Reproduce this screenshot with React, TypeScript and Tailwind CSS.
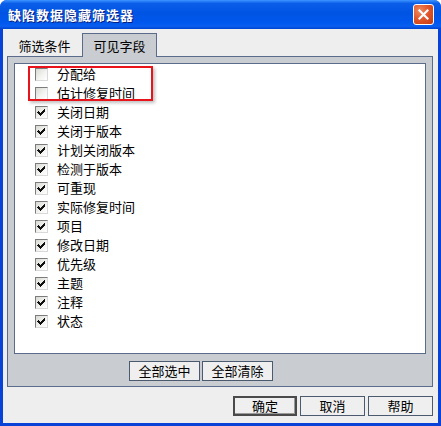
import React from 'react';

const fields = [
  { label: '分配给', checked: false },
  { label: '估计修复时间', checked: false },
  { label: '关闭日期', checked: true },
  { label: '关闭于版本', checked: true },
  { label: '计划关闭版本', checked: true },
  { label: '检测于版本', checked: true },
  { label: '可重现', checked: true },
  { label: '实际修复时间', checked: true },
  { label: '项目', checked: true },
  { label: '修改日期', checked: true },
  { label: '优先级', checked: true },
  { label: '主题', checked: true },
  { label: '注释', checked: true },
  { label: '状态', checked: true },
];

const font = "font-['SimSun','Noto_Sans_CJK_SC',sans-serif]";

const CheckBox = ({ checked }: { checked: boolean }) => (
  <div className="w-[13px] h-[13px] shrink-0 border border-t-[#7c7c7c] border-l-[#7c7c7c] border-r-[#d8d8d8] border-b-[#d8d8d8] bg-[linear-gradient(135deg,#d9d9d4_0%,#f4f4f2_60%,#ffffff_100%)]">
    {checked && (
      <svg width="11" height="11" viewBox="0 0 11 11" shapeRendering="crispEdges">
        <path d="M2 4h1v1h1v1h1v-1h1v-1h1v-1h1v-1h1v3h-1v1h-1v1h-1v1h-1v1h-1v-1h-1v-1h-1v-1h-1z" fill="#111" />
      </svg>
    )}
  </div>
);

const Btn = ({ label, width, isDefault }: { label: string; width: string; isDefault?: boolean }) => (
  <button
    className={`${width} h-[20px] flex items-center justify-center bg-[#efefef] text-[13px] text-black ${
      isDefault ? 'border-2 border-[#4a4a4a] shadow-[inset_-1px_-1px_0_#9a9a9a]' : 'border border-[#4b5a6e]'
    }`}
  >
    {label}
  </button>
);

const App: React.FC = () => {
  return (
    <div className={`w-[441px] h-[426px] flex flex-col bg-[#0842d6] rounded-t-[7px] overflow-hidden ${font}`}>
      {/* title bar */}
      <div className="h-[29px] shrink-0 flex items-center justify-between pl-[8px] pr-[7px] bg-[linear-gradient(to_bottom,#3d95ff_0%,#0a5ee8_12%,#0054e3_45%,#0058ee_80%,#0a5ff0_90%,#0044d0_100%)]">
        <span className="text-white font-bold text-[13px] tracking-[1px] [text-shadow:1px_1px_0_#0a1e7d]">缺陷数据隐藏筛选器</span>
        <div className="w-[21px] h-[21px] rounded-[3px] border border-white flex items-center justify-center bg-[radial-gradient(circle_at_30%_30%,#f08a60_0%,#e2582c_45%,#c43a10_100%)]">
          <svg width="11" height="11" viewBox="0 0 11 11">
            <path d="M1.5 1.5 L9.5 9.5 M9.5 1.5 L1.5 9.5" stroke="#fff" strokeWidth="2.2" strokeLinecap="square" />
          </svg>
        </div>
      </div>

      {/* body */}
      <div className="flex-1 mx-[3px] mb-[3px] bg-[#eeeeee] pt-[4px] pl-[4px] pr-[5px] flex flex-col">
        <div className="h-[23px] flex items-end">
          <div className="w-[75px] h-[21px] flex items-center justify-center text-[13px] text-black">筛选条件</div>
          <div className="relative z-10 -mb-px w-[75px] h-[24px] flex items-center justify-center border border-b-0 border-[#5a6b8c] bg-[#c9ccd1] text-[13px] text-black">
            可见字段
          </div>
        </div>

        <div className="h-[331px] border border-[#5a6b8c] bg-[#c9ccd1] pt-[6px] px-[6px] pb-[5px] flex flex-col">
          <div className="relative h-[291px] border border-[#5a6b8c] bg-white pt-[1px]">
            {fields.map((f) => (
              <div key={f.label} className="h-[19px] flex items-center pl-[20px] gap-[9px]">
                <CheckBox checked={f.checked} />
                <span className="text-[13px] text-black leading-none -mt-[2px]">{f.label}</span>
              </div>
            ))}
            <div className="absolute left-[13px] top-[2px] w-[125px] h-[35px] border-2 border-[#e8141c] shadow-[2px_2px_3px_rgba(0,0,0,0.25)]" />
          </div>
          <div className="mt-[7px] flex gap-[2px] pl-[115px]">
            <Btn label="全部选中" width="w-[71px]" />
            <Btn label="全部清除" width="w-[71px]" />
          </div>
        </div>

        <div className="mt-[9px] flex justify-end gap-[3px]">
          <Btn label="确定" width="w-[64px]" isDefault />
          <Btn label="取消" width="w-[65px]" />
          <Btn label="帮助" width="w-[65px]" />
        </div>
      </div>
    </div>
  );
};

export default App;
